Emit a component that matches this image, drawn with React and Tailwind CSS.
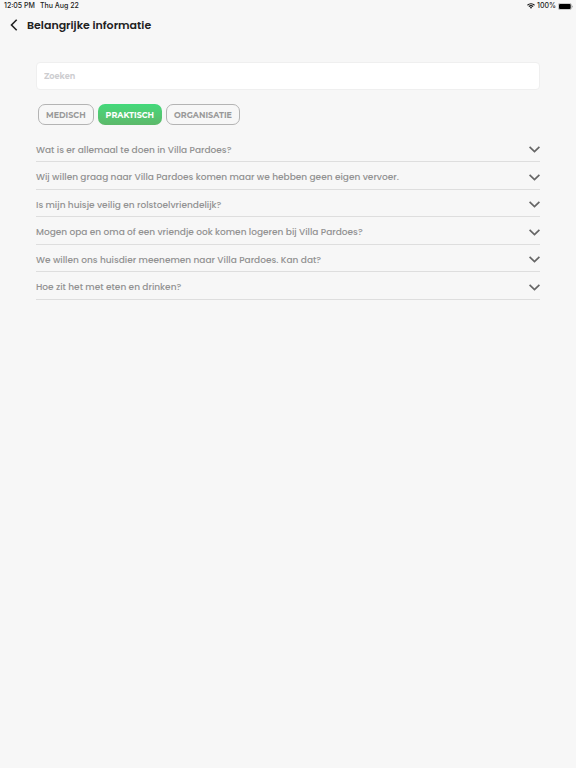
import React, { useState } from 'react';

const categories = ['MEDISCH', 'PRAKTISCH', 'ORGANISATIE'];

const questions = [
  'Wat is er allemaal te doen in Villa Pardoes?',
  'Wij willen graag naar Villa Pardoes komen maar we hebben geen eigen vervoer.',
  'Is mijn huisje veilig en rolstoelvriendelijk?',
  'Mogen opa en oma of een vriendje ook komen logeren bij Villa Pardoes?',
  'We willen ons huisdier meenemen naar Villa Pardoes. Kan dat?',
  'Hoe zit het met eten en drinken?'
];

function StatusBar() {
  return (
    <div className="flex h-3 items-center justify-between pl-1 pr-[3px] font-['Inter',sans-serif] text-[7px] leading-3 font-medium text-[#222]">
      <div className="flex gap-[5px]">
        <span>12:05 PM</span>
        <span>Thu Aug 22</span>
      </div>
      <div className="flex items-center gap-[2px]">
        <svg width="8" height="6" viewBox="0 0 16 12" fill="none" stroke="#111" strokeWidth="2.2">
          <path d="M1 4.5a10 10 0 0 1 14 0" />
          <path d="M3.8 7.3a6 6 0 0 1 8.4 0" />
          <path d="M8 11.6 5.6 9.2a3.4 3.4 0 0 1 4.8 0z" fill="#111" stroke="none" />
        </svg>
        <span>100%</span>
        <svg width="15" height="7" viewBox="0 0 15 7">
          <rect x="0.3" y="0.3" width="13.1" height="6.4" rx="1.7" fill="#f7f7f7" stroke="#8a8a8a" strokeWidth="0.5" />
          <rect x="1" y="1" width="11.7" height="5" rx="1" fill="#000" />
          <path d="M14 2.4c.9.3.9 1.9 0 2.2z" fill="#8a8a8a" />
        </svg>
      </div>
    </div>
  );
}

export default function App() {
  const [active, setActive] = useState('PRAKTISCH');
  const [search, setSearch] = useState('');

  return (
    <div className="min-h-screen bg-[#f7f7f7] font-['Poppins','Inter',sans-serif]">
      <StatusBar />

      <header className="flex h-[26px] items-center gap-[9px] pl-[10px]">
        <button type="button" aria-label="Terug">
          <svg width="8" height="12" viewBox="0 0 8 12" fill="none" stroke="#222" strokeWidth="1.6">
            <path d="M6.7 0.8 1.5 6l5.2 5.2" />
          </svg>
        </button>
        <h1 className="text-[11px] leading-5 font-semibold text-[#222]">Belangrijke informatie</h1>
      </header>

      <main className="px-9 pt-6">
        <input
          type="text"
          aria-label="Zoeken"
          placeholder="Zoeken"
          value={search}
          onChange={(e) => setSearch(e.target.value)}
          className="block h-7 w-full rounded border border-[#efefef] bg-white px-[7px] font-['Montserrat','Lato',sans-serif] text-[8px] font-bold text-[#555] placeholder:text-[#cdcdd0]"
        />

        {/* Categories */}
        <div className="mt-[14px] flex gap-1 px-[2px] font-['Montserrat','Lato',sans-serif]">
          {categories.map((name) => (
            <button
              key={name}
              type="button"
              onClick={() => setActive(name)}
              className={
                active === name
                  ? 'h-[21px] rounded-[7px] bg-linear-to-b from-[#43d97b] to-[#5cb96a] px-2 text-[8px] font-bold text-white'
                  : 'h-[21px] rounded-[7px] border border-[#b4b4b4] px-[7px] text-[8px] font-bold text-[#999]'
              }
            >
              {name}
            </button>
          ))}
        </div>

        {/* Questions */}
        <ul className="mt-[10px]">
          {questions.map((question) => (
            <li key={question} className="border-b border-[#dedede] odd:h-[27px] even:h-7">
              <button type="button" className="flex h-full w-full items-center justify-between pt-[3px] text-left text-[9px] font-medium text-[#929292]">
                <span className="pt-[2px]">{question}</span>
                <svg width="11" height="7" viewBox="0 0 11 7" fill="none" stroke="#666" strokeWidth="1.7">
                  <path d="M0.6 0.8 5.5 5.6l4.9-4.8" />
                </svg>
              </button>
            </li>
          ))}
        </ul>
      </main>
    </div>
  );
}
